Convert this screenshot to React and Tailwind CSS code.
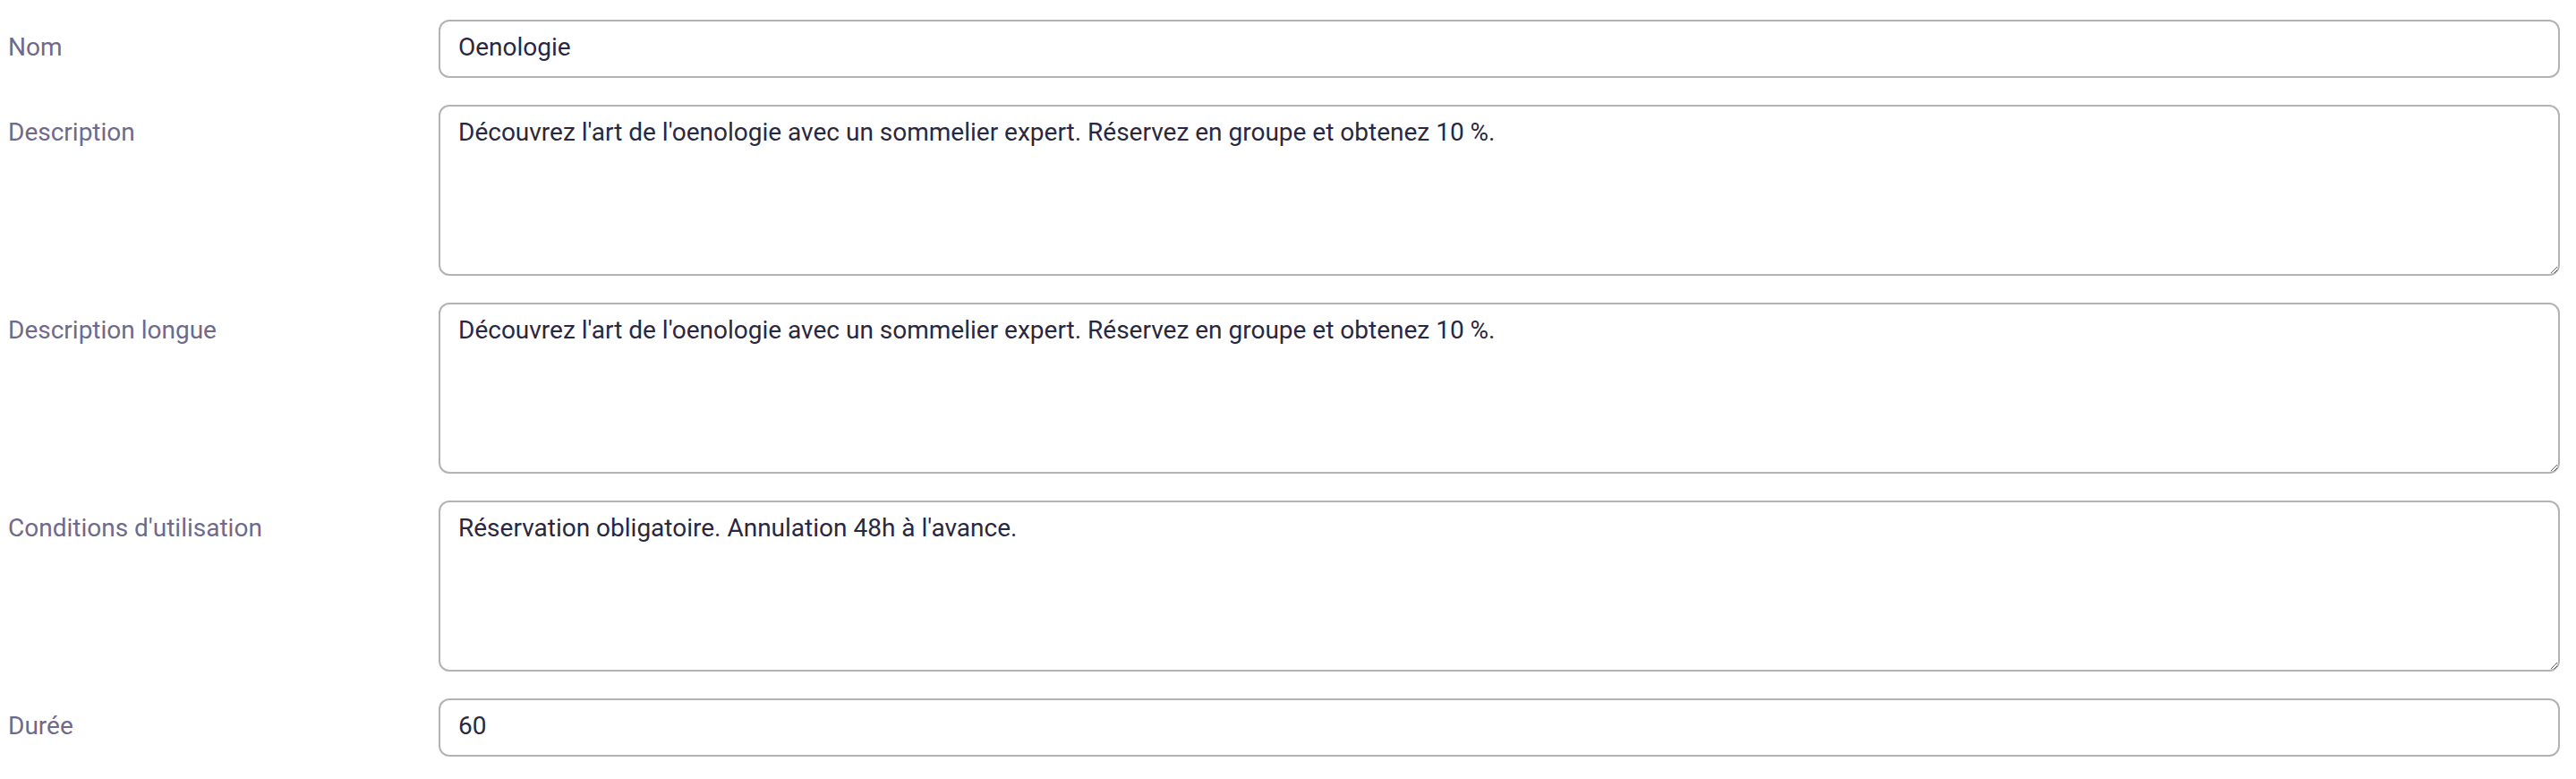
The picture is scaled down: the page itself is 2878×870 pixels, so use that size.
import React from "react";

const font = { fontFamily: "Roboto, 'Noto Sans', sans-serif" };

function Row({ label, children }) {
  return (
    <div className="flex items-start">
      <div className="w-[490px] shrink-0 pl-[9px] pt-[11px] text-[28px] leading-[40px] text-[#6e6a8c]">
        {label}
      </div>
      <div className="flex-1 min-w-0">{children}</div>
    </div>
  );
}

export default function App() {
  const desc =
    "Découvrez l'art de l'oenologie avec un sommelier expert. Réservez en groupe et obtenez 10 %.";
  return (
    <div
      className="w-[2878px] h-[870px] bg-white pt-[22px] pr-[18px] flex flex-col gap-[30px] font-['Roboto',sans-serif]"
      style={font}
    >
      <Row label="Nom">
        <input
          readOnly
          defaultValue="Oenologie"
          className="block w-full h-[65px] rounded-[12px] border-2 border-[#b3b3b3] bg-white px-[20px] pb-[4px] text-[28px] text-[#2a2840] outline-none font-['Roboto',sans-serif]"
        />
      </Row>
      <Row label="Description">
        <textarea
          readOnly
          defaultValue={desc}
          className="block w-full h-[191px] rounded-[12px] border-2 border-[#b3b3b3] bg-white px-[20px] pt-[9px] text-[28px] leading-[40px] text-[#2a2840] outline-none font-['Roboto',sans-serif]"
        />
      </Row>
      <Row label="Description longue">
        <textarea
          readOnly
          defaultValue={desc}
          className="block w-full h-[191px] rounded-[12px] border-2 border-[#b3b3b3] bg-white px-[20px] pt-[9px] text-[28px] leading-[40px] text-[#2a2840] outline-none font-['Roboto',sans-serif]"
        />
      </Row>
      <Row label="Conditions d'utilisation">
        <textarea
          readOnly
          defaultValue="Réservation obligatoire. Annulation 48h à l'avance."
          className="block w-full h-[191px] rounded-[12px] border-2 border-[#b3b3b3] bg-white px-[20px] pt-[9px] text-[28px] leading-[40px] text-[#2a2840] outline-none font-['Roboto',sans-serif]"
        />
      </Row>
      <Row label="Durée">
        <input
          readOnly
          defaultValue="60"
          className="block w-full h-[65px] rounded-[12px] border-2 border-[#b3b3b3] bg-white px-[20px] pb-[4px] text-[28px] text-[#2a2840] outline-none font-['Roboto',sans-serif]"
        />
      </Row>
    </div>
  );
}
